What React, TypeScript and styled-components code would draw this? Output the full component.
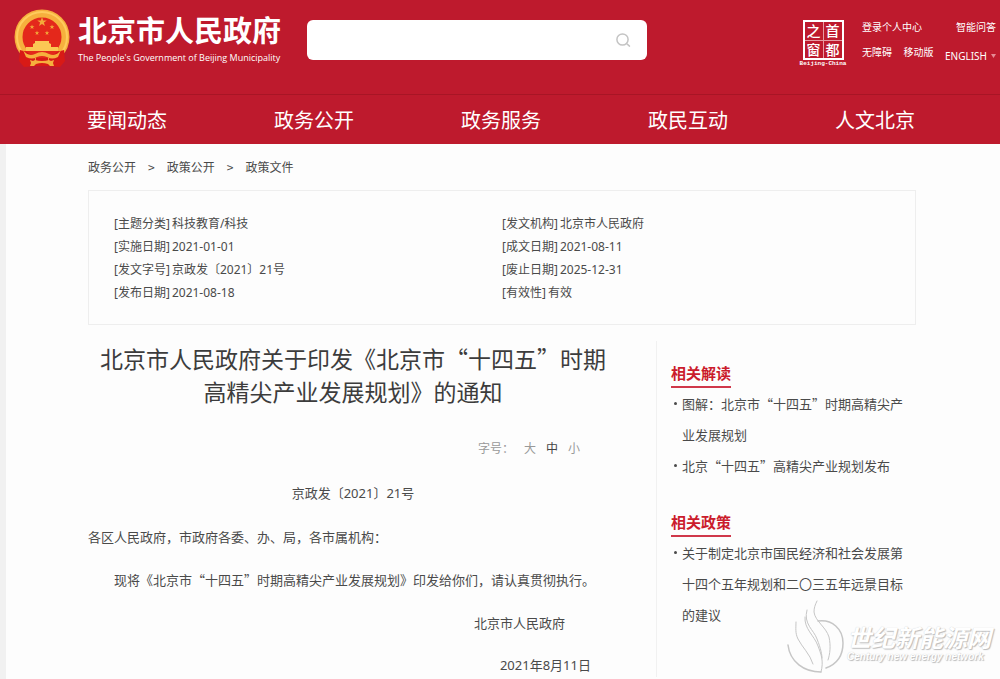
import React from "react";
import styled, { createGlobalStyle } from "styled-components";

const cjk = `"Noto Sans CJK SC", sans-serif`;
const latin = `"Noto Sans", "Noto Sans CJK SC", sans-serif`;
const red = "#be1a2d";

const GlobalStyle = createGlobalStyle`
  *, *::before, *::after { box-sizing: border-box; }
  body { margin: 0; background: #fdfdfd; color: #4a4a4a; font-family: ${cjk}; font-size: 13px; }
  h1, h2, p, ul, ol, dl, dd, dt { margin: 0; padding: 0; }
  ul, ol { list-style: none; }
  a { color: inherit; text-decoration: none; }
  button { border: 0; padding: 0; background: none; font: inherit; color: inherit; cursor: pointer; }
`;

const Page = styled.div`
  position: relative;
  display: flex;
  flex-direction: column;
  min-height: 100vh;
  overflow: hidden;
`;

const Header = styled.header`
  background: ${red};
  color: #fff;
`;

const TopBar = styled.div`
  display: flex;
  align-items: flex-start;
  height: 94px;
  padding: 0 4px 0 14px;
`;

const Brand = styled.a`
  display: flex;
  gap: 6px;
  width: 293px;
  padding-top: 9px;
`;

const BrandText = styled.span`
  display: flex;
  flex-direction: column;
  white-space: nowrap;
`;

const BrandName = styled.span`
  font-size: 29px;
  font-weight: 700;
  line-height: 40px;
`;

const BrandEnglish = styled.span`
  font-family: "Open Sans", sans-serif;
  font-size: 9px;
  line-height: 18px;
`;

const Search = styled.form`
  display: flex;
  align-items: center;
  flex: 0 1 340px;
  height: 40px;
  margin-top: 20px;
  padding: 0 15px;
  border-radius: 6px;
  background: #fff;
`;

const SearchInput = styled.input`
  flex: 1;
  min-width: 0;
  height: 100%;
  border: 0;
  outline: 0;
  background: transparent;
  font: inherit;
`;

const SearchButton = styled.button`
  display: flex;
  color: #c4c4c4;
`;

const Tools = styled.div`
  display: flex;
  gap: 15px;
  margin-left: auto;
  padding-top: 20px;
`;

const Seal = styled.a`
  display: flex;
  flex-direction: column;
  align-items: center;
  width: 48px;
`;

const SealGrid = styled.span`
  display: grid;
  grid-template-columns: 1fr 1fr;
  gap: 1px;
  width: 41px;
  height: 40px;
  border: 2px solid #fff;
  background: #e79aa2;
`;

const SealCell = styled.span`
  background: ${red};
  font-size: 14px;
  font-weight: 500;
  line-height: 17px;
  text-align: center;
`;

const SealCaption = styled.span`
  font-family: "Liberation Mono", monospace;
  font-size: 6px;
  font-weight: 700;
  line-height: 8px;
  white-space: nowrap;
`;

const ToolRows = styled.div`
  display: flex;
  flex-direction: column;
  gap: 11px;
  width: 134px;
  font-size: 10px;
  line-height: 14px;
`;

const ToolRow = styled.div`
  display: flex;
  justify-content: space-between;
  white-space: nowrap;
`;

const EnglishLink = styled.a`
  display: flex;
  align-items: center;
  gap: 4px;
  padding-top: 4px;
  font-family: ${latin};
`;

const Nav = styled.nav`
  border-top: 1px solid #a81525;
  padding: 0 85px 0 87px;
`;

const NavList = styled.ul`
  display: flex;
  justify-content: space-between;
  font-size: 20px;
  line-height: 49px;
`;

const Main = styled.main`
  flex: 1;
  padding: 0 84px 0 82px;
  border-left: 6px solid #f1f1f1;
`;

const Crumbs = styled.ol`
  display: flex;
  gap: 12px;
  padding: 13px 0 13px;
  font-size: 12px;
  line-height: 20px;
`;

const Info = styled.dl`
  display: grid;
  grid-template-columns: 1fr 1fr;
  padding: 21px 25px 20px;
  border: 1px solid #eee;
  font-family: ${latin};
  font-size: 12px;
  line-height: 23px;
`;

const InfoItem = styled.div`
  display: flex;
  gap: 2px;
`;

const Columns = styled.div`
  display: grid;
  grid-template-columns: 1fr 260px;
  margin-top: 16px;
`;

const Article = styled.article`
  padding: 1px 38px 0 0;
`;

const Title = styled.h1`
  color: #3c3c3c;
  font-size: 23px;
  font-weight: 400;
  line-height: 33px;
  text-align: center;
`;

const FontSizes = styled.div`
  display: flex;
  justify-content: flex-end;
  gap: 10px;
  padding: 30px 38px 0 0;
  color: #999;
  font-size: 12px;
  line-height: 20px;
`;

const SizeButton = styled.button<{ $active?: boolean }>`
  color: ${(p) => (p.$active ? "#444" : "#999")};
`;

const Body = styled.div`
  display: flex;
  flex-direction: column;
  gap: 20px;
  padding-top: 24px;
  font-family: ${cjk};
  line-height: 23px;
`;

const Salutation = styled.p``;

const Paragraph = styled.p`
  text-indent: 2em;
`;

const DocNumber = styled.p`
  font-family: ${latin};
  text-align: center;
`;

const Signature = styled.p`
  padding-right: 53px;
  text-align: right;
`;

const IssueDate = styled.p`
  padding-right: 27px;
  font-family: ${latin};
  text-align: right;
`;

const Sidebar = styled.aside`
  display: flex;
  flex-direction: column;
  gap: 28px;
  padding: 19px 4px 0 14px;
  border-left: 1px solid #f1f1f1;
`;

const SideHeading = styled.h2`
  width: fit-content;
  border-bottom: 2px solid #d0384a;
  color: #cb1c2c;
  font-size: 15px;
  font-weight: 700;
  line-height: 26px;
`;

const SideItem = styled.li`
  display: flex;
  gap: 5px;
  padding-left: 3px;
  line-height: 31px;

  &::before {
    content: "";
    flex: none;
    width: 3px;
    height: 3px;
    margin-top: 14px;
    border-radius: 50%;
    background: #4a4a4a;
  }
`;

const Watermark = styled.div`
  position: absolute;
  right: 9px;
  bottom: 4px;
  display: flex;
  align-items: flex-end;
  gap: 3px;
  color: #fff;
  font-style: italic;
  font-weight: 700;
  white-space: nowrap;
  text-shadow: 1px 1px 1px #bbb, 0 0 1px #ccc;
  pointer-events: none;
`;

const WatermarkText = styled.div`
  display: flex;
  flex-direction: column;
  padding-bottom: 12px;
`;

const WatermarkName = styled.span`
  font-size: 24px;
  line-height: 28px;
`;

const WatermarkEnglish = styled.span`
  font-family: "Liberation Sans", sans-serif;
  font-size: 10px;
  line-height: 12px;
`;

const star = (cx: number, cy: number, r: number) =>
  Array.from({ length: 10 }, (_, i) => {
    const a = (Math.PI / 5) * i - Math.PI / 2;
    const d = i % 2 ? r * 0.4 : r;
    return `${(cx + d * Math.cos(a)).toFixed(2)},${(cy + d * Math.sin(a)).toFixed(2)}`;
  }).join(" ");

const Emblem = () => (
  <svg width="58" height="60" viewBox="0 0 58 60" aria-hidden="true">
    <circle cx="28" cy="28" r="23.5" fill="#e4281b" stroke="#f6b03d" strokeWidth="8" />
    <circle cx="28" cy="28" r="25" fill="none" stroke="#ffcb5c" strokeWidth="2" />
    <g fill="#f3a93a">
      <polygon points={star(28, 13, 5)} />
      <polygon points={star(18, 18, 2.6)} />
      <polygon points={star(38, 18, 2.6)} />
      <polygon points={star(23, 24, 2.4)} />
      <polygon points={star(33, 24, 2.4)} />
    </g>
    <path d="M21 32h14v2l2 1v3h7v4H12v-4h7v-3l2-1z" fill="#fbc754" />
    <path d="M9 42 H47 L42 49 H14 Z" fill="#e4281b" />
    <path d="M6 41 L13 43 L21 49 L22 57 L10 58 L5 52 Z M50 41 L43 43 L35 49 L34 57 L46 58 L51 52 Z" fill="#d81a16" />
    <path d="M22 49 H34 V57 H22 Z" fill="#d81a16" />
    <path d="M9 41 Q14 48 21 45 Q28 41 35 45 Q42 48 47 41 L44 48 Q38 51 33 48 Q28 46 23 48 Q18 51 12 48 Z" fill="#f6b03d" />
    <path d="M16 51 l3 1 2-1 q3 1 7 1 t7-1 l2 1 3-1 -1 3 1 3 -4 0 -2-2 q-3-1-6-1 t-6 1 l-2 2 -4 0 1-3z" fill="#f6b03d" />
  </svg>
);

const SearchIcon = () => (
  <svg width="18" height="18" viewBox="0 0 18 18" fill="none" stroke="currentColor" strokeWidth="1.5" aria-hidden="true">
    <circle cx="8.5" cy="8.5" r="5.6" />
    <path d="M12.5 12.5l3 2.6" strokeLinecap="round" />
  </svg>
);

const Flame = () => (
  <svg width="58" height="75" viewBox="0 0 58 75" fill="none" stroke="#c6c6c6" strokeLinecap="round" aria-hidden="true">
    <path d="M31 1 C29 5 28 8 28 12 C29 21 40 27 43 37 C45 46 44 54 42 60" />
    <path d="M21 10 C17 24 28 30 31 39 C35 49 36 55 36 58" />
    <path d="M19 17 C18 29 28 35 32 46 C35 54 38 61 35 72" />
    <path d="M10 22 C10 28 9 33 12 39 C16 47 24 54 27 64" />
    <path d="M32 21 C46 19 57 29 57 43 C57 55 51 64 40 68" strokeWidth="1.5" />
    <path d="M2 45 C4 62 18 72 35 72" strokeWidth="1.5" />
  </svg>
);

const navItems = ["要闻动态", "政务公开", "政务服务", "政民互动", "人文北京"];

const info: [string, string][] = [
  ["[主题分类]", "科技教育/科技"],
  ["[发文机构]", "北京市人民政府"],
  ["[实施日期]", "2021-01-01"],
  ["[成文日期]", "2021-08-11"],
  ["[发文字号]", "京政发〔2021〕21号"],
  ["[废止日期]", "2025-12-31"],
  ["[发布日期]", "2021-08-18"],
  ["[有效性]", "有效"],
];

const related = [
  {
    heading: "相关解读",
    items: ["图解：北京市“十四五”时期高精尖产业发展规划", "北京“十四五”高精尖产业规划发布"],
  },
  {
    heading: "相关政策",
    items: ["关于制定北京市国民经济和社会发展第十四个五年规划和二〇三五年远景目标的建议"],
  },
];

export default function App() {
  return (
    <Page lang="zh-CN">
      <GlobalStyle />
      <Header>
        <TopBar>
          <Brand href="#">
            <Emblem />
            <BrandText>
              <BrandName>北京市人民政府</BrandName>
              <BrandEnglish>The People's Government of Beijing Municipality</BrandEnglish>
            </BrandText>
          </Brand>
          <Search role="search" onSubmit={(e) => e.preventDefault()}>
            <SearchInput type="text" aria-label="搜索" />
            <SearchButton type="submit" aria-label="搜索">
              <SearchIcon />
            </SearchButton>
          </Search>
          <Tools>
            <Seal href="#">
              <SealGrid>
                <SealCell>之</SealCell>
                <SealCell>首</SealCell>
                <SealCell>窗</SealCell>
                <SealCell>都</SealCell>
              </SealGrid>
              <SealCaption>Beijing-China</SealCaption>
            </Seal>
            <ToolRows>
              <ToolRow>
                <a href="#">登录个人中心</a>
                <a href="#">智能问答</a>
              </ToolRow>
              <ToolRow>
                <a href="#">无障碍</a>
                <a href="#">移动版</a>
                <EnglishLink href="#">
                  ENGLISH
                  <svg width="5" height="4" viewBox="0 0 5 4" fill="#e58a94" aria-hidden="true">
                    <path d="M0 0h5L2.5 4z" />
                  </svg>
                </EnglishLink>
              </ToolRow>
            </ToolRows>
          </Tools>
        </TopBar>
        <Nav>
          <NavList>
            {navItems.map((item) => (
              <li key={item}>
                <a href="#">{item}</a>
              </li>
            ))}
          </NavList>
        </Nav>
      </Header>

      <Main>
        <Crumbs>
          <li><a href="#">政务公开</a></li>
          <li aria-hidden="true">&gt;</li>
          <li><a href="#">政策公开</a></li>
          <li aria-hidden="true">&gt;</li>
          <li><a href="#">政策文件</a></li>
        </Crumbs>

        <Info>
          {info.map(([label, value]) => (
            <InfoItem key={label}>
              <dt>{label}</dt>
              <dd>{value}</dd>
            </InfoItem>
          ))}
        </Info>

        <Columns>
          <Article>
            <Title>
              北京市人民政府关于印发《北京市“十四五”时期
              <br />
              高精尖产业发展规划》的通知
            </Title>
            <FontSizes>
              <span>字号：</span>
              <SizeButton type="button">大</SizeButton>
              <SizeButton type="button" $active>中</SizeButton>
              <SizeButton type="button">小</SizeButton>
            </FontSizes>
            <Body>
              <DocNumber>京政发〔2021〕21号</DocNumber>
              <Salutation>各区人民政府，市政府各委、办、局，各市属机构：</Salutation>
              <Paragraph>现将《北京市“十四五”时期高精尖产业发展规划》印发给你们，请认真贯彻执行。</Paragraph>
              <Signature>北京市人民政府</Signature>
              <IssueDate>2021年8月11日</IssueDate>
            </Body>
          </Article>
          <Sidebar>
            {related.map(({ heading, items }) => (
              <section key={heading}>
                <SideHeading>{heading}</SideHeading>
                <ul>
                  {items.map((item) => (
                    <SideItem key={item}>
                      <a href="#">{item}</a>
                    </SideItem>
                  ))}
                </ul>
              </section>
            ))}
          </Sidebar>
        </Columns>
      </Main>

      <Watermark>
        <Flame />
        <WatermarkText>
          <WatermarkName>世纪新能源网</WatermarkName>
          <WatermarkEnglish>Century new energy network</WatermarkEnglish>
        </WatermarkText>
      </Watermark>
    </Page>
  );
}
